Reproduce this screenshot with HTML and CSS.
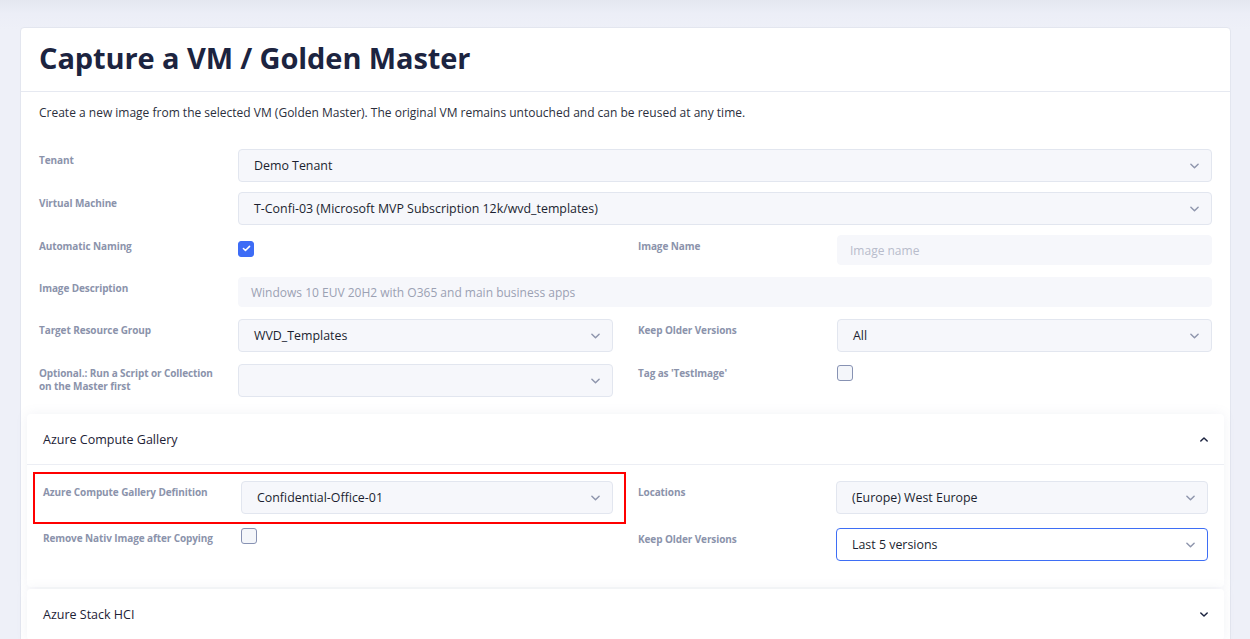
FILE: index.html
```html
<!DOCTYPE html>
<html lang="en">
<head>
<meta charset="utf-8">
<title>Capture a VM / Golden Master</title>
<link rel="stylesheet" href="styles.css">
</head>
<body>
<div class="page">
  <div class="card">
    <div class="card-header">
      <h1 class="title">Capture a VM / Golden Master</h1>
    </div>
    <div class="card-body">
      <p class="intro">Create a new image from the selected VM (Golden Master). The original VM remains untouched and can be reused at any time.</p>

      <div class="form">
        <label class="lbl">Tenant</label>
        <div class="ctl full"><div class="select"><span>Demo Tenant</span><svg class="chev" viewBox="0 0 10 6"><path d="M1 1l4 4 4-4"/></svg></div></div>

        <label class="lbl">Virtual Machine</label>
        <div class="ctl full"><div class="select"><span>T-Confi-03 (Microsoft MVP Subscription 12k/wvd_templates)</span><svg class="chev" viewBox="0 0 10 6"><path d="M1 1l4 4 4-4"/></svg></div></div>

        <label class="lbl">Automatic Naming</label>
        <div class="ctl"><span class="check on"><svg viewBox="0 0 10 8"><path d="M1.5 4l2.3 2.3L8.5 1.6"/></svg></span></div>
        <div class="gap"></div>
        <label class="lbl">Image Name</label>
        <div class="ctl"><div class="input placeholder">Image name</div></div>

        <label class="lbl">Image Description</label>
        <div class="ctl full"><div class="input muted">Windows 10 EUV 20H2 with O365 and main business apps</div></div>

        <label class="lbl">Target Resource Group</label>
        <div class="ctl"><div class="select"><span>WVD_Templates</span><svg class="chev" viewBox="0 0 10 6"><path d="M1 1l4 4 4-4"/></svg></div></div>
        <div class="gap"></div>
        <label class="lbl">Keep Older Versions</label>
        <div class="ctl"><div class="select"><span>All</span><svg class="chev" viewBox="0 0 10 6"><path d="M1 1l4 4 4-4"/></svg></div></div>

        <label class="lbl">Optional.: Run a Script or Collection on the Master first</label>
        <div class="ctl shifted"><div class="select"><span></span><svg class="chev" viewBox="0 0 10 6"><path d="M1 1l4 4 4-4"/></svg></div></div>
        <div class="gap"></div>
        <label class="lbl">Tag as 'TestImage'</label>
        <div class="ctl shifted"><span class="check"></span></div>
      </div>
    </div>

    <div class="acc">
      <div class="acc-head">
        <span>Azure Compute Gallery</span>
        <svg class="acc-chev" viewBox="0 0 10 6"><path d="M1 5l4-4 4 4"/></svg>
      </div>
      <div class="acc-body">
        <div class="half">
          <div class="field highlight">
            <label class="lbl">Azure Compute Gallery Definition</label>
            <div class="select"><span>Confidential-Office-01</span><svg class="chev" viewBox="0 0 10 6"><path d="M1 1l4 4 4-4"/></svg></div>
          </div>
          <div class="field">
            <label class="lbl">Remove Nativ Image after Copying</label>
            <div><span class="check"></span></div>
          </div>
        </div>
        <div class="half">
          <div class="field">
            <label class="lbl">Locations</label>
            <div class="select"><span>(Europe) West Europe</span><svg class="chev" viewBox="0 0 10 6"><path d="M1 1l4 4 4-4"/></svg></div>
          </div>
          <div class="field">
            <label class="lbl">Keep Older Versions</label>
            <div class="select focus"><span>Last 5 versions</span><svg class="chev" viewBox="0 0 10 6"><path d="M1 1l4 4 4-4"/></svg></div>
          </div>
        </div>
      </div>
    </div>

    <div class="acc acc-closed">
      <div class="acc-head">
        <span>Azure Stack HCI</span>
        <svg class="acc-chev" viewBox="0 0 10 6"><path d="M1 1l4 4 4-4"/></svg>
      </div>
    </div>
  </div>
</div>
</body>
</html>
```

FILE: styles.css
```css
* { box-sizing: border-box; }
html, body { margin: 0; padding: 0; }
body {
  font-family: "Open Sans", "Noto Sans", sans-serif;
  background: linear-gradient(#e4e7f0 0, #eceef7 14px, #eef0f8 30px);
  color: #1d2236;
  height: 639px;
  overflow: hidden;
}
.page {
  padding: 27px 19px 0 20px;
}
.card {
  background: #fff;
  border: 1px solid #e3e6ef;
  border-radius: 4px;
  padding-bottom: 40px;
}
.card-header {
  height: 64px;
  border-bottom: 1px solid #e6e9f1;
  display: flex;
  align-items: center;
  padding: 0 18px 4px 18px;
}
.title {
  margin: 0;
  font-size: 29px;
  font-weight: 700;
  color: #1c2440;
  letter-spacing: -0.1px;
}
.card-body {
  padding: 12px 18px 0 18px;
}
.intro {
  margin: 0 0 27px 0;
  font-size: 12px;
  line-height: 18px;
  color: #2b2f3d;
}
.form {
  display: grid;
  grid-template-columns: 199px 1fr 25px 199px 1fr;
  row-gap: 10px;
  align-items: start;
}
.ctl.full { grid-column: 2 / -1; }
.ctl.shifted { margin-top: 2px; }
.lbl {
  font-size: 10px;
  font-weight: 700;
  color: #8b93ab;
  line-height: 13px;
  padding-top: 5px;
  padding-right: 12px;
  letter-spacing: -0.1px;
}
.select, .input {
  height: 33px;
  background: #f6f7fb;
  border: 1px solid #e2e6ef;
  border-radius: 4px;
  display: flex;
  align-items: center;
  justify-content: space-between;
  padding: 0 12px 0 15px;
  font-size: 12.4px;
  color: #1b1f30;
}
.input {
  height: 30px;
  border-color: #f6f7fb;
  padding-left: 12px;
  margin-bottom: 2px;
  font-size: 12px;
}
.input.placeholder { color: #b8bccb; }
.input.muted { color: #9ba1b3; }
.chev {
  width: 9px;
  height: 6px;
  fill: none;
  stroke: #8f96ad;
  stroke-width: 1.6;
  stroke-linecap: round;
  stroke-linejoin: round;
  flex: none;
}
.select.focus {
  background: #fff;
  border-color: #3e6ef5;
}
.check {
  display: inline-flex;
  align-items: center;
  justify-content: center;
  width: 16px;
  height: 16px;
  border: 1.5px solid #8792b3;
  border-radius: 3px;
  background: #f4f6fa;
}
.check.on {
  background: #3d6cf6;
  border-color: #3d6cf6;
}
.check svg {
  width: 9px;
  height: 7px;
  fill: none;
  stroke: #fff;
  stroke-width: 1.8;
  stroke-linecap: round;
  stroke-linejoin: round;
}

.acc {
  margin: 17px 6px 0 6px;
  background: #fff;
  border-radius: 4px;
  box-shadow: 0 0 12px rgba(120, 130, 170, 0.10);
}
.acc-closed { margin-top: 2px; }
.acc-head {
  height: 51px;
  display: flex;
  align-items: center;
  justify-content: space-between;
  padding: 0 16px;
  font-size: 12.5px;
  color: #1d2236;
  border-bottom: 1px solid #eceef4;
}
.acc-closed .acc-head { border-bottom: none; }
.acc-chev {
  width: 8px;
  height: 5px;
  fill: none;
  stroke: #1c2440;
  stroke-width: 1.8;
  stroke-linecap: round;
  stroke-linejoin: round;
}
.acc-body {
  display: grid;
  grid-template-columns: 1fr 1fr;
  column-gap: 25px;
  padding: 16px 16px 26px 16px;
}
.half {
  display: flex;
  flex-direction: column;
  gap: 13px;
}
.half + .half .field + .field { margin-top: 1px; }
.field {
  display: grid;
  grid-template-columns: 198px 1fr;
  align-items: start;
}
.field.highlight {
  position: relative;
}
.field.highlight::after {
  content: "";
  position: absolute;
  left: -10px; right: -13px; top: -9px; bottom: -10px;
  border: 2px solid #f00;
}
```
